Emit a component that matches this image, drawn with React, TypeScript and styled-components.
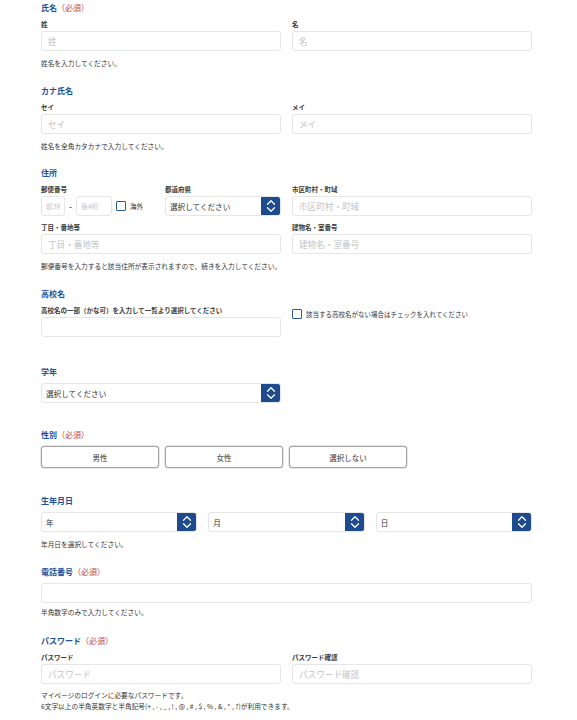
import styled, { createGlobalStyle } from "styled-components";

const GlobalStyle = createGlobalStyle`
  html, body {
    margin: 0;
    padding: 0;
    background: #fff;
  }
  body {
    font-family: "Noto Sans CJK JP", "Noto Sans", sans-serif;
    color: #333;
  }
  * {
    box-sizing: border-box;
  }
`;

const Form = styled.form`
  width: 491px;
  margin-left: 41px;
  padding-top: 3px;
`;

const Section = styled.section<{ $space: number }>`
  margin-bottom: ${(p) => p.$space}px;
`;

const Title = styled.h2`
  margin: 0 0 6px;
  font-size: 8px;
  line-height: 10px;
  font-weight: 700;
  color: #1d5299;
`;

const Required = styled.span`
  font-weight: 400;
  color: #c2413b;
`;

const Row = styled.div<{ $cols: string; $gap?: number }>`
  display: grid;
  grid-template-columns: ${(p) => p.$cols};
  column-gap: ${(p) => p.$gap ?? 11}px;
  row-gap: 6px;
  align-items: end;
`;

const Field = styled.div`
  display: flex;
  flex-direction: column;
  gap: 2px;
  min-width: 0;
`;

const Label = styled.label`
  font-size: 6.5px;
  line-height: 10px;
  font-weight: 700;
  color: #3a3a3a;
  white-space: nowrap;
`;

const Input = styled.input`
  display: block;
  width: 100%;
  height: 20px;
  padding: 0 6px;
  border: 1px solid #e6e6e6;
  border-radius: 3px;
  background: #fff;
  font-family: inherit;
  font-size: 8.6px;
  color: #333;
  outline: none;
  &::placeholder {
    color: #c4c4c4;
  }
`;

const SmallInput = styled(Input)<{ $w: number }>`
  width: ${(p) => p.$w}px;
  font-size: 6.8px;
  padding: 0 4px;
`;

const Help = styled.p<{ $top?: number }>`
  margin: ${(p) => p.$top ?? 7}px 0 0;
  font-size: 6.7px;
  line-height: 11px;
  color: #333;
`;

const SelectBox = styled.div`
  display: flex;
  height: 20px;
  border: 1px solid #e6e6e6;
  border-radius: 3px;
  background: #fff;
  overflow: hidden;
`;

const SelectText = styled.span`
  flex: 1;
  display: flex;
  align-items: center;
  padding-left: 4px;
  font-size: 7.6px;
  color: #333;
`;

const SelectButton = styled.span`
  width: 20px;
  margin: -1px -1px -1px 0;
  background: #1e4b8e;
  border-radius: 0 3px 3px 0;
  display: flex;
  align-items: center;
  justify-content: center;
`;

const PostalRow = styled.div`
  display: flex;
  align-items: center;
  height: 20px;
`;

const Dash = styled.span`
  width: 11px;
  text-align: center;
  font-size: 8px;
  font-weight: 700;
  color: #555;
`;

const Check = styled.label<{ $left?: number }>`
  display: flex;
  align-items: center;
  gap: 4px;
  margin-left: ${(p) => p.$left ?? 0}px;
  font-size: 6.5px;
  color: #333;
  white-space: nowrap;
`;

const Box = styled.span`
  width: 10px;
  height: 10px;
  border: 1.5px solid #2c5d9e;
  border-radius: 1px;
  background: #fff;
  flex-shrink: 0;
`;

const SchoolCheck = styled(Check)`
  align-self: start;
  padding-top: 4px;
`;

const ChoiceGroup = styled.div`
  display: flex;
  gap: 6px;
`;

const Choice = styled.button`
  width: 118px;
  height: 22px;
  border: 1px solid #a3a3a3;
  border-radius: 3px;
  background: #fff;
  box-shadow: 0 0 0 0.5px #d0d0d0;
  font-family: inherit;
  font-size: 7.5px;
  color: #333;
  padding: 0;
`;

function Chevrons() {
  return (
    <svg width="10" height="14" viewBox="0 0 10 14" fill="none">
      <path d="M1.5 5.2 5 1.7l3.5 3.5" stroke="#fff" strokeWidth="1.3" strokeLinecap="round" strokeLinejoin="round" />
      <path d="M1.5 8.8 5 12.3l3.5-3.5" stroke="#fff" strokeWidth="1.3" strokeLinecap="round" strokeLinejoin="round" />
    </svg>
  );
}

function Select({ text }: { text: string }) {
  return (
    <SelectBox>
      <SelectText>{text}</SelectText>
      <SelectButton>
        <Chevrons />
      </SelectButton>
    </SelectBox>
  );
}

export default function App() {
  return (
    <>
      <GlobalStyle />
      <Form>
        <Section $space={17}>
          <Title>
            氏名<Required>（必須）</Required>
          </Title>
          <Row $cols="1fr 1fr">
            <Field>
              <Label>姓</Label>
              <Input placeholder="姓" />
            </Field>
            <Field>
              <Label>名</Label>
              <Input placeholder="名" />
            </Field>
          </Row>
          <Help>姓名を入力してください。</Help>
        </Section>

        <Section $space={16}>
          <Title>カナ氏名</Title>
          <Row $cols="1fr 1fr">
            <Field>
              <Label>セイ</Label>
              <Input placeholder="セイ" />
            </Field>
            <Field>
              <Label>メイ</Label>
              <Input placeholder="メイ" />
            </Field>
          </Row>
          <Help>姓名を全角カタカナで入力してください。</Help>
        </Section>

        <Section $space={17}>
          <Title>住所</Title>
          <Row $cols="1fr 1fr">
            <Row $cols="116px 1fr" $gap={8}>
              <Field>
                <Label>郵便番号</Label>
                <PostalRow>
                  <SmallInput $w={24} placeholder="前3桁" />
                  <Dash>-</Dash>
                  <SmallInput $w={36} placeholder="後4桁" />
                  <Check $left={4}>
                    <Box />
                    海外
                  </Check>
                </PostalRow>
              </Field>
              <Field>
                <Label>都道府県</Label>
                <Select text="選択してください" />
              </Field>
            </Row>
            <Field>
              <Label>市区町村・町域</Label>
              <Input placeholder="市区町村・町域" />
            </Field>
            <Field>
              <Label>丁目・番地等</Label>
              <Input placeholder="丁目・番地等" />
            </Field>
            <Field>
              <Label>建物名・室番号</Label>
              <Input placeholder="建物名・室番号" />
            </Field>
          </Row>
          <Help>郵便番号を入力すると該当住所が表示されますので、続きを入力してください。</Help>
        </Section>

        <Section $space={30}>
          <Title>高校名</Title>
          <Row $cols="1fr 1fr">
            <Field>
              <Label>高校名の一部（かな可）を入力して一覧より選択してください</Label>
              <Input />
            </Field>
            <SchoolCheck>
              <Box />
              該当する高校名がない場合はチェックを入れてください
            </SchoolCheck>
          </Row>
        </Section>

        <Section $space={27}>
          <Title>学年</Title>
          <Row $cols="1fr 1fr">
            <Select text="選択してください" />
          </Row>
        </Section>

        <Section $space={28}>
          <Title>
            性別<Required>（必須）</Required>
          </Title>
          <ChoiceGroup>
            <Choice type="button">男性</Choice>
            <Choice type="button">女性</Choice>
            <Choice type="button">選択しない</Choice>
          </ChoiceGroup>
        </Section>

        <Section $space={17}>
          <Title>生年月日</Title>
          <Row $cols="1fr 1fr 1fr">
            <Select text="年" />
            <Select text="月" />
            <Select text="日" />
          </Row>
          <Help>年月日を選択してください。</Help>
        </Section>

        <Section $space={18}>
          <Title>
            電話番号<Required>（必須）</Required>
          </Title>
          <Input />
          <Help $top={4}>半角数字のみで入力してください。</Help>
        </Section>

        <Section $space={0}>
          <Title>
            パスワード<Required>（必須）</Required>
          </Title>
          <Row $cols="1fr 1fr">
            <Field>
              <Label>パスワード</Label>
              <Input placeholder="パスワード" />
            </Field>
            <Field>
              <Label>パスワード確認</Label>
              <Input placeholder="パスワード確認" />
            </Field>
          </Row>
          <Help $top={6}>
            マイページのログインに必要なパスワードです。
            <br />
            6文字以上の半角英数字と半角記号(+ , - , _ , ! , @ , # , $ , % , & , * , ?)が利用できます。
          </Help>
        </Section>
      </Form>
    </>
  );
}
